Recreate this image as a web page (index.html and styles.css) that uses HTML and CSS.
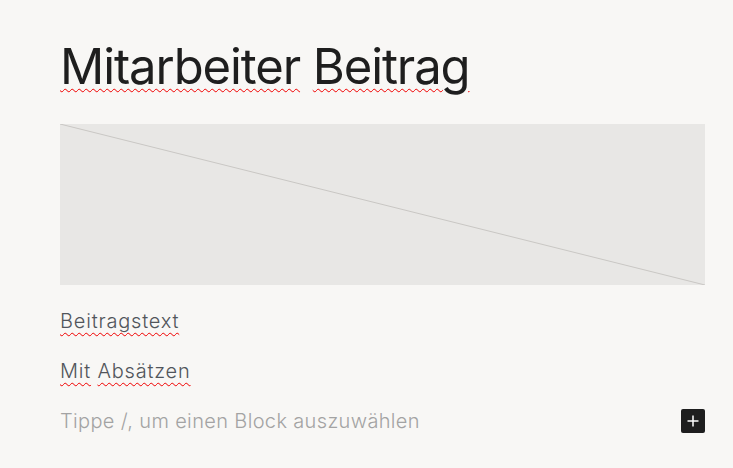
FILE: index.html
```html
<!DOCTYPE html>
<html lang="de">
<head>
<meta charset="utf-8">
<title>Mitarbeiter Beitrag</title>
<link rel="stylesheet" href="styles.css">
</head>
<body>
<main class="editor">
  <h1 class="post-title"><span class="sp">Mitarbeiter</span> <span class="sp">Beitrag</span></h1>
  <div class="image-placeholder">
    <svg class="diag" viewBox="0 0 100 100" preserveAspectRatio="none"><line x1="0" y1="0" x2="100" y2="100" vector-effect="non-scaling-stroke"/></svg>
  </div>
  <p class="para"><span class="sp">Beitragstext</span></p>
  <p class="para"><span class="sp">Mit</span> <span class="sp">Absätzen</span></p>
  <div class="appender">
    <span class="placeholder">Tippe /, um einen Block auszuwählen</span>
    <button class="add-btn" aria-label="Block hinzufügen">
      <svg viewBox="0 0 24 24" width="24" height="24"><path d="M11.25 6.5h1.5v4.75h4.75v1.5h-4.75v4.75h-1.5v-4.75H6.5v-1.5h4.75z"/></svg>
    </button>
  </div>
</main>
</body>
</html>
```
FILE: styles.css
```css
html, body {
  margin: 0;
  padding: 0;
  background: #f8f7f5;
}
body {
  font-family: Inter, "Noto Sans", "DejaVu Sans", sans-serif;
  color: #1e1e1e;
}
.editor {
  padding: 35px 28px 0 60px;
  display: flex;
  flex-direction: column;
}
.post-title {
  margin: 0;
  font-size: 49px;
  font-weight: 400;
  line-height: 64px;
  letter-spacing: -1.1px;
  color: #1e1e1e;
}
.sp {
  text-decoration: underline wavy #f00000;
  text-decoration-thickness: 1.2px;
  text-underline-offset: 4px;
}
.image-placeholder {
  margin-top: 25px;
  height: 161px;
  background: #e8e7e5;
  position: relative;
}
.diag {
  position: absolute;
  inset: 0;
  width: 100%;
  height: 100%;
}
.diag line {
  stroke: #c9c7c4;
  stroke-width: 1;
}
.para {
  margin: 22px 0 0;
  font-size: 20px;
  line-height: 28px;
  letter-spacing: 0.8px;
  color: #51555b;
  font-weight: 300;
}
.para + .para {
  margin-top: 22px;
}
.appender {
  margin-top: 22px;
  display: flex;
  align-items: center;
  justify-content: space-between;
  height: 28px;
}
.placeholder {
  font-size: 20px;
  line-height: 28px;
  letter-spacing: 0.35px;
  color: #a3a3a3;
  font-weight: 300;
}
.add-btn {
  width: 24px;
  height: 24px;
  padding: 0;
  border: 0;
  border-radius: 2px;
  background: #1e1e1e;
  display: flex;
  align-items: center;
  justify-content: center;
}
.add-btn svg {
  fill: #ffffff;
}
```
